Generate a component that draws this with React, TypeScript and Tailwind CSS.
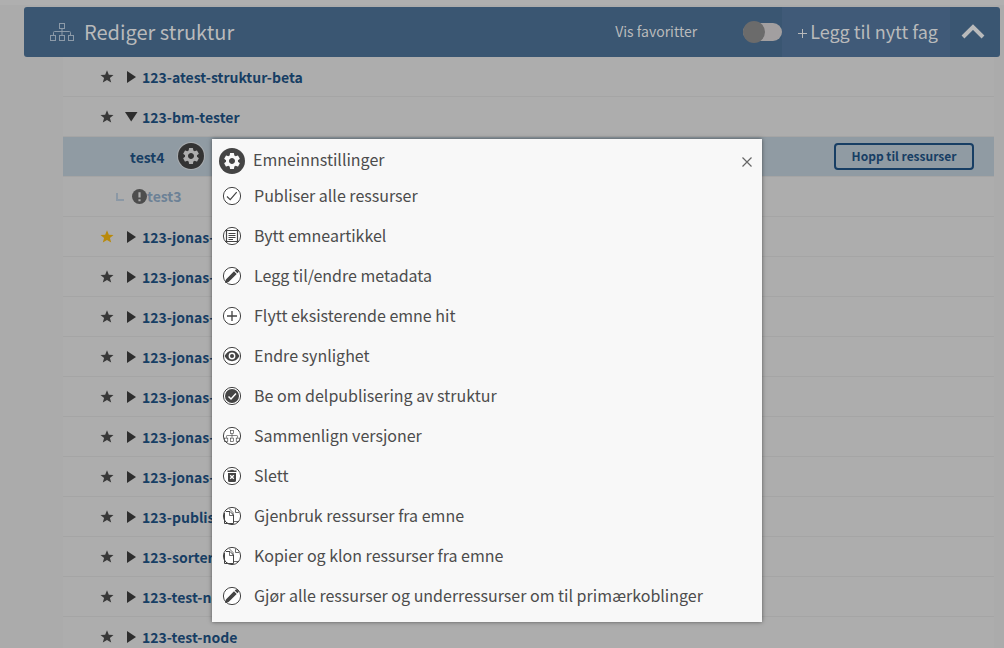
import type { ReactNode } from 'react'
import { MdSettings } from 'react-icons/md'

const FONT = 'font-["Noto_Sans_CJK_SC","Noto_Sans",sans-serif]'

const SUBJECTS = [
  '123-jonas-a',
  '123-jonas-b',
  '123-jonas-c',
  '123-jonas-d',
  '123-jonas-e',
  '123-jonas-f',
  '123-jonas-g',
  '123-publiser',
  '123-sorter',
  '123-test-no',
  '123-test-node',
]

function TreeGlyph() {
  return (
    <g fill="none" stroke="currentColor">
      <rect x="9.5" y="0.5" width="5" height="5" />
      <rect x="0.5" y="12.5" width="5" height="5" />
      <rect x="9.5" y="12.5" width="5" height="5" />
      <rect x="18.5" y="12.5" width="5" height="5" />
      <path d="M12 6v6M3.5 12V9.500Q3.500 8.500 4.500 8.500H19.500Q20.500 8.500 20.500 9.500V12" />
    </g>
  )
}

function StarButton({ active = false }: { active?: boolean }) {
  return (
    <button
      type="button"
      aria-label="Favoritt"
      className={active ? 'text-[#b98a0c]' : 'text-[#383838]'}
    >
      <svg width="14" height="14" viewBox="0 0 14 14" fill="currentColor">
        <path d="M7 .3 8.800 4.700 13.500 5 9.900 8 11.200 12.600 7 10.100 2.800 12.600 4.100 8 .5 5 5.200 4.700Z" />
      </svg>
    </button>
  )
}

function SubjectRow({
  name,
  favorite = false,
  open = false,
}: {
  name: string
  favorite?: boolean
  open?: boolean
}) {
  return (
    <li className="flex h-10 items-center border-b border-[#a5a5a5] pl-[37px]">
      <StarButton active={favorite} />
      <button
        type="button"
        aria-expanded={open}
        className="ml-2.5 flex items-center gap-1 text-[#173e64]"
      >
        <svg width="14" height="14" viewBox="0 0 14 14" fill="#2d2d2d">
          {open ? <path d="M1 2H13.500L7.200 11.500Z" /> : <path d="M3 1V13L12 7Z" />}
        </svg>
        <span className="text-sm font-semibold whitespace-nowrap">{name}</span>
      </button>
    </li>
  )
}

function Gear({ dimmed = false }: { dimmed?: boolean }) {
  return (
    <span
      className={
        dimmed
          ? 'flex size-[26px] shrink-0 items-center justify-center rounded-full bg-[#333] text-[#adadad] ring-1 ring-[#a9adb0]'
          : 'flex size-[26px] shrink-0 items-center justify-center rounded-full bg-[#444] text-[#f8f8f8]'
      }
    >
      <MdSettings className="size-5" />
    </span>
  )
}

function RoundIcon({ children }: { children: ReactNode }) {
  return (
    <svg width="20" height="20" viewBox="0 0 20 20" className="shrink-0" aria-hidden="true">
      <circle cx="10" cy="10" r="8.600" fill="#fff" stroke="#444" />
      {children}
    </svg>
  )
}

const check = (
  <path d="m5 10.500 3.200 3.200 6.500-7.500" fill="none" stroke="#444" strokeWidth="1.200" />
)
const article = (
  <g fill="none" stroke="#444">
    <path d="M4.500 4.500H15.500V15.500H4.500Z" strokeWidth="1.200" />
    <path d="M6.500 7.500H13.500M6.500 9.500H13.500M6.500 11.500H13.500M6.500 13.500H11" />
  </g>
)
const pen = (
  <path
    d="M3 17 3.900 13.400 12 5.300 14.700 8 6.600 16.100ZM12.700 4.600 13.900 3.400Q14.400 2.900 14.900 3.400L16.600 5.100Q17.100 5.600 16.600 6.100L15.400 7.300Z"
    fill="#444"
  />
)
const plus = <path d="M10 5v10M5 10h10" stroke="#444" strokeWidth="1.300" />
const eye = (
  <g>
    <path d="M2.500 10Q5.500 4.800 10 4.800T17.500 10Q14.500 15.200 10 15.200T2.500 10Z" fill="#444" />
    <circle cx="10" cy="10" r="3.400" fill="#fff" />
    <circle cx="10" cy="10" r="2" fill="#444" />
  </g>
)
const checkFilled = (
  <g>
    <circle cx="10" cy="10" r="7" fill="#444" />
    <path d="m6.500 10.500 2.500 2.500 5-5.500" fill="none" stroke="#fff" strokeWidth="1.500" />
  </g>
)
const versions = (
  <g transform="translate(2.200 4) scale(.65)" className="text-[#444]">
    <TreeGlyph />
  </g>
)
const trash = (
  <g>
    <path d="M5.500 4.500H8L8.800 3.800H11.200L12 4.500H14.500V6H5.500ZM6 7H14V14.500Q14 16 12.500 16H7.500Q6 16 6 14.500Z" fill="#444" />
    <path d="m8.200 9.200 3.600 3.600M11.800 9.200 8.200 12.800" stroke="#fff" strokeWidth="1.300" />
  </g>
)
const copy = (
  <g fill="none" stroke="#444">
    <path d="M2.500 7V17.500H11.500V9L8 5.500H4" />
    <path d="M7.500 5.500V9.500H11.500" strokeWidth=".8" />
    <path d="M7 2.500 11 6.500V9M13.500 2.500V6.500H17M11.500 15.500H16.500" strokeWidth=".8" />
  </g>
)

const MENU_ITEMS: { label: string; icon: ReactNode }[] = [
  { label: 'Publiser alle ressurser', icon: check },
  { label: 'Bytt emneartikkel', icon: article },
  { label: 'Legg til/endre metadata', icon: pen },
  { label: 'Flytt eksisterende emne hit', icon: plus },
  { label: 'Endre synlighet', icon: eye },
  { label: 'Be om delpublisering av struktur', icon: checkFilled },
  { label: 'Sammenlign versjoner', icon: versions },
  { label: 'Slett', icon: trash },
  { label: 'Gjenbruk ressurser fra emne', icon: copy },
  { label: 'Kopier og klon ressurser fra emne', icon: copy },
  { label: 'Gjør alle ressurser og underressurser om til primærkoblinger', icon: pen },
]

function TopicSettings() {
  return (
    <div
      role="dialog"
      aria-labelledby="settings-title"
      className="absolute top-[134px] left-[212px] w-[550px] bg-[#f8f8f8] pb-1.5 text-[#4c4c4c] shadow-[0_0_4px_rgba(0,0,0,0.5)]"
    >
      <div className="flex h-[37px] items-center gap-2 pt-1.5 pr-0.5 pl-[7px]">
        <Gear />
        <h2 id="settings-title" className="grow pb-1 text-base">
          Emneinnstillinger
        </h2>
        <button type="button" aria-label="Lukk" className="px-2 pt-2.5 pb-2">
          <svg width="10" height="10" viewBox="0 0 10 10" stroke="#666" strokeWidth="1.200">
            <path d="m.5.5 9 9M9.500.5l-9 9" />
          </svg>
        </button>
      </div>
      <ul>
        {MENU_ITEMS.map(({ label, icon }) => (
          <li key={label}>
            <button type="button" className="flex h-10 w-full items-center gap-3 pl-2.5 text-base">
              <RoundIcon>{icon}</RoundIcon>
              <span className="pb-0.5">{label}</span>
            </button>
          </li>
        ))}
      </ul>
    </div>
  )
}

export default function App() {
  return (
    <div className={`${FONT} relative h-screen overflow-hidden border-t-[5px] border-[#afafaf] bg-[#ababab]`}>
      <header className="mt-0.5 mr-1 ml-6 flex h-[50px] items-center rounded-[3px] bg-[#3a5672] pl-[26px] text-[#b9babb]">
        <svg width="24" height="18" viewBox="0 0 24 18" className="text-[#8c9aa8]">
          <TreeGlyph />
        </svg>
        <h1 className="ml-2.5 grow text-xl">Rediger struktur</h1>
        <label htmlFor="favorites" className="pb-0.5 text-sm">
          Vis favoritter
        </label>
        <span className="relative ml-[46px] flex h-[22px] w-[39px] items-center">
          <input
            id="favorites"
            type="checkbox"
            role="switch"
            className="peer h-[18px] w-full appearance-none rounded-full bg-[#a29fa0]"
          />
          <span className="pointer-events-none absolute left-0 size-[22px] rounded-full bg-[#6b6b6b] peer-checked:left-auto peer-checked:right-0" />
        </span>
        <button type="button" className="flex h-full items-center gap-[3px] bg-[#405a78] pr-3 pl-4 text-lg">
          <svg width="9" height="9" viewBox="0 0 9 9" stroke="currentColor" className="mt-0.5">
            <path d="M4.500 0v9M0 4.500h9" />
          </svg>
          <span className="pb-0.5">Legg til nytt fag</span>
        </button>
        <button type="button" aria-label="Lukk struktur" className="flex h-full w-[50px] items-center justify-center pr-1">
          <svg width="24" height="16" viewBox="0 0 24 16" fill="none" stroke="currentColor" strokeWidth="4">
            <path d="m2 13 10-10 10 10" />
          </svg>
        </button>
      </header>

      <ul className="mr-2.5 ml-[63px] bg-[#adadad]">
        <SubjectRow name="123-atest-struktur-beta" />
        <SubjectRow name="123-bm-tester" open />
        <li className="flex h-10 items-center border-b border-[#a5a5a5] bg-[#909ba3] pr-5 pl-[67px]">
          <a href="#test4" className="text-sm font-semibold text-[#173e64]">
            test4
          </a>
          <button type="button" aria-label="Emneinnstillinger" className="ml-[13px] pb-0.5">
            <Gear dimmed />
          </button>
          <button
            type="button"
            className="ml-auto h-[27px] w-[140px] rounded border-2 border-[#173e64] pb-0.5 text-[12px] font-bold text-[#173e64]"
          >
            Hopp til ressurser
          </button>
        </li>
        <li className="flex h-10 items-center border-b border-[#a5a5a5] pl-[53px]">
          <svg width="8" height="8" viewBox="0 0 8 8" fill="none" stroke="#8b98a5" strokeWidth="2">
            <path d="M1 0v7h7" />
          </svg>
          <svg width="15" height="15" viewBox="0 0 14 14" className="ml-2">
            <circle cx="7" cy="7" r="7" fill="#4d4d4d" />
            <path d="M7 3v5M7 9.500v2" stroke="#adadad" strokeWidth="2" />
          </svg>
          <a href="#test3" className="pb-0.5 text-sm font-semibold text-[#6c8196]">
            test3
          </a>
        </li>
        {SUBJECTS.map((name, i) => (
          <SubjectRow key={i} name={name} favorite={i === 0} />
        ))}
      </ul>

      <TopicSettings />
    </div>
  )
}
